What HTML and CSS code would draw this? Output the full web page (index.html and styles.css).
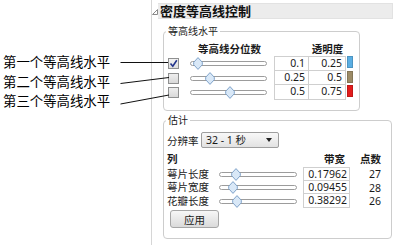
FILE: index.html
```html
<!DOCTYPE html>
<html>
  <head>
    <meta charset="utf-8">
    <title>密度等高线控制</title>
    <link rel="stylesheet" href="styles.css">
  </head>
  <body>
    <div class="page">
      <!-- callout labels on the left -->
      <div class="callouts">
        <p>第一个等高线水平</p>
        <p>第二个等高线水平</p>
        <p>第三个等高线水平</p>
      </div>

      <!-- the control panel -->
      <div class="panel">
        <div class="panel-head">
          <svg class="disclosure" width="6" height="6" viewBox="0 0 6 6">
            <path d="M0.5 5.5 L5.5 5.5 L5.5 0.5 Z" fill="none" stroke="#8a8a8a" stroke-width="1"/>
          </svg>
          <div class="panel-title">密度等高线控制</div>
        </div>

        <div class="group levels">
          <span class="legend">等高线水平</span>
          <div class="levels-grid">
            <span></span>
            <span class="col-head quant-head">等高线分位数</span>
            <span></span>
            <span class="col-head alpha-head">透明度</span>
            <span></span>

            <span class="checkbox checked">
              <svg width="9" height="9" viewBox="0 0 9 9"><path d="M1.5 4.5 L3.8 7.2 L7.8 1.2" fill="none" stroke="#22348c" stroke-width="1.6"/></svg>
            </span>
            <div class="slider"><span class="thumb" style="left: 7px"></span></div>
            <span class="cell first">0.1</span>
            <span class="cell">0.25</span>
            <span class="swatch" style="background: #5aaee3"></span>

            <span class="checkbox"></span>
            <div class="slider"><span class="thumb" style="left: 19px"></span></div>
            <span class="cell first">0.25</span>
            <span class="cell">0.5</span>
            <span class="swatch" style="background: #9c8b66"></span>

            <span class="checkbox"></span>
            <div class="slider"><span class="thumb" style="left: 39px"></span></div>
            <span class="cell first">0.5</span>
            <span class="cell">0.75</span>
            <span class="swatch" style="background: #e21c1c"></span>
          </div>
        </div>

        <div class="group estimate">
          <span class="legend">估计</span>
          <div class="res-row">
            <span class="res-label">分辨率</span>
            <div class="dropdown">
              <span>32 - 1 秒</span>
              <span class="caret"></span>
            </div>
          </div>

          <div class="bw-grid">
            <span class="col-head">列</span>
            <span></span>
            <span class="col-head bw-head">带宽</span>
            <span class="col-head num-head">点数</span>

            <span class="row-label">萼片长度</span>
            <div class="slider wide"><span class="thumb" style="left: 16px"></span></div>
            <span class="cell box first-row">0.17962</span>
            <span class="count">27</span>

            <span class="row-label">萼片宽度</span>
            <div class="slider wide"><span class="thumb" style="left: 13px"></span></div>
            <span class="cell box">0.09455</span>
            <span class="count">28</span>

            <span class="row-label">花瓣长度</span>
            <div class="slider wide"><span class="thumb" style="left: 17px"></span></div>
            <span class="cell box">0.38292</span>
            <span class="count">26</span>
          </div>

          <button class="apply">应用</button>
        </div>
      </div>

      <!-- leader lines from labels to checkboxes -->
      <svg class="leaders" width="398" height="245" viewBox="0 0 398 245">
        <line x1="120.5" y1="62.5" x2="168" y2="62.5" stroke="#111" stroke-width="1"/>
        <line x1="120.5" y1="83.5" x2="169" y2="77.5" stroke="#111" stroke-width="1"/>
        <line x1="120.5" y1="104" x2="169" y2="95" stroke="#111" stroke-width="1"/>
      </svg>
    </div>
  </body>
</html>
```

FILE: styles.css
```css
/* Reset / Global */
* {
  margin: 0;
  padding: 0;
  box-sizing: border-box;
}

body {
  font-family: "Noto Sans", "Noto Sans CJK SC", sans-serif;
  background-color: #FFFFFF;
  color: #1a1a1a;
}

.page {
  position: relative;
  display: flex;
  width: 398px;
  height: 245px;
  overflow: hidden;
}

/* Left callouts */
.callouts {
  width: 151px;
  padding-top: 52px;
  padding-left: 3px;
}
.callouts p {
  font-family: "Noto Sans CJK SC", sans-serif;
  font-size: 13.4px;
  line-height: 19.5px;
  color: #000;
  white-space: nowrap;
}

.leaders {
  position: absolute;
  top: 0;
  left: 0;
  pointer-events: none;
}

/* Panel */
.panel {
  width: 247px;
  border-left: 1px solid #d6d6d6;
  font-size: 10.5px;
}
.panel-head {
  display: flex;
  align-items: center;
  height: 16px;
  margin-top: 3px;
}
.disclosure {
  margin: 2px 0 0 0;
  flex: none;
}
.panel-title {
  flex: 1;
  height: 16px;
  margin-right: 5px;
  padding-left: 2px;
  background-color: #ececec;
  border: 1px solid #e2e2e2;
  border-left: none;
  font-family: "Noto Sans CJK SC", sans-serif;
  font-size: 13px;
  font-weight: bold;
  line-height: 14px;
  color: #111;
}

/* Group boxes */
.group {
  position: relative;
  margin-left: 11px;
  border: 1px solid #cdcdcd;
  border-radius: 4px;
}
.legend {
  position: absolute;
  top: -8px;
  left: 2px;
  padding: 0 2px;
  background-color: #FFFFFF;
  line-height: 14px;
  font-size: 10px;
}
.levels {
  width: 197px;
  height: 80px;
  margin-top: 12px;
  padding: 10px 0 0 4px;
}
.estimate {
  width: 229px;
  height: 119px;
  margin-top: 9px;
  padding: 11px 0 0 3px;
}

.col-head {
  font-weight: bold;
  line-height: 14px;
  white-space: nowrap;
}

/* Levels grid */
.levels-grid {
  display: grid;
  grid-template-columns: 22px 84px 35px 37px 8px;
  grid-template-rows: 14px 15px 14px 15px;
  align-items: center;
}
.quant-head {
  padding-left: 8px;
}
.alpha-head {
  text-align: center;
  grid-column: 4;
}

.checkbox {
  width: 11px;
  height: 11px;
  border: 1px solid #8f9090;
  background: linear-gradient(#eeeeee, #d9d9d9);
  display: flex;
  align-items: center;
  justify-content: center;
}
.checkbox.checked {
  background: linear-gradient(#f3f3f3, #dedede);
}

.cell {
  align-self: stretch;
  border-right: 1px solid #cfcfcf;
  border-bottom: 1px solid #cfcfcf;
  text-align: right;
  padding-right: 3px;
  line-height: 13px;
}
.levels-grid .cell.first {
  border-left: 1px solid #cfcfcf;
}
.levels-grid .cell:nth-child(8),
.levels-grid .cell:nth-child(9) {
  border-top: 1px solid #cfcfcf;
}
.swatch {
  align-self: start;
  width: 6px;
  height: 12px;
  margin-left: 1px;
  border: 1px solid rgba(0, 0, 0, 0.15);
}

/* Sliders */
.slider {
  position: relative;
  width: 77px;
  height: 5px;
  border: 1px solid #9c9c9c;
  border-radius: 3px;
  background-color: #FFFFFF;
}
.slider.wide {
  width: 78px;
}
.thumb {
  position: absolute;
  top: -5px;
  width: 10px;
  height: 13px;
  margin-left: -5px;
  background: url("data:image/svg+xml,%3Csvg xmlns='http://www.w3.org/2000/svg' width='10' height='13' viewBox='0 0 10 13'%3E%3Cpath d='M5 0.6 L9.3 5.3 L9.3 7.7 L5 12.4 L0.7 7.7 L0.7 5.3 Z' fill='%23d9e8f7' stroke='%237fa2c9' stroke-width='1' stroke-linejoin='round'/%3E%3C/svg%3E") no-repeat;
}

/* Estimate group */
.res-row {
  display: flex;
  align-items: center;
  height: 16px;
}
.res-label {
  width: 34px;
}
.dropdown {
  display: flex;
  align-items: center;
  justify-content: space-between;
  width: 78px;
  height: 16px;
  padding: 0 4px;
  border: 1px solid #9e9e9e;
  border-radius: 2px;
  background: linear-gradient(#f8f8f8, #e2e2e2);
  line-height: 14px;
}
.caret {
  width: 0;
  height: 0;
  border-left: 3px solid transparent;
  border-right: 3px solid transparent;
  border-top: 4px solid #222;
  margin-right: 2px;
}

.bw-grid {
  display: grid;
  grid-template-columns: 52px 84px 47px 31px;
  grid-template-rows: 17px 14px 13px 14px;
  align-items: center;
  margin-top: 2px;
}
.bw-head {
  text-align: right;
  padding-right: 5px;
}
.num-head {
  text-align: right;
}
.row-label {
  line-height: 13px;
}
.cell.box {
  border-left: 1px solid #cfcfcf;
  padding-right: 2px;
}
.cell.box.first-row {
  border-top: 1px solid #cfcfcf;
}
.count {
  text-align: right;
}

.apply {
  display: block;
  width: 49px;
  height: 18px;
  margin: 2px 0 0 3px;
  border: 1px solid #a6a6a6;
  border-radius: 3px;
  background: linear-gradient(#f7f7f7, #dadada);
  font-family: "Noto Sans CJK SC", sans-serif;
  font-size: 10.5px;
  color: #1a1a1a;
}
```
